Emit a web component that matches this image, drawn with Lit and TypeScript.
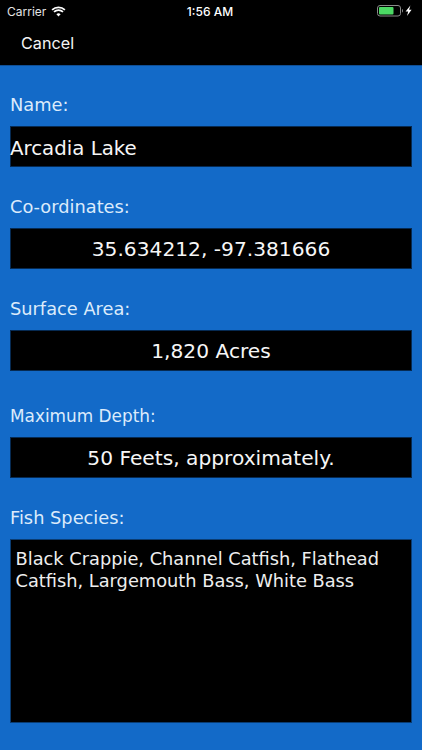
import { LitElement, html, css, svg } from "lit";
import { customElement } from "lit/decorators.js";

@customElement("app-root")
export class AppRoot extends LitElement {
  static styles = css`
    :host { display: flex; flex-direction: column; width: 422px; height: 750px; overflow: hidden; background: #136ac8; color: #fff; font-family: "DejaVu Sans", Verdana, sans-serif; }
    .top { height: 65px; flex: none; background: #000; display: flex; flex-direction: column; border-bottom: 1px solid #0f4f96; box-sizing: content-box; }
    .status { height: 22px; padding: 0 9px 0 7px; display: grid; grid-template-columns: 1fr auto 1fr; align-items: center; font-family: Inter, "Liberation Sans", sans-serif; font-size: 12px; color: #fff; }
    .left { display: flex; align-items: center; gap: 5px; color: #e4e4e4; }
    .time { font-weight: 500; font-size: 12px; }
    .right { display: flex; justify-content: flex-end; align-items: center; gap: 1px; }
    .nav { height: 43px; display: flex; align-items: center; padding: 0 0 2px 21px; font-family: Inter, "Liberation Sans", sans-serif; font-size: 16.2px; box-sizing: border-box; color: #f4f4f4; }
    .form { flex: 1; display: flex; flex-direction: column; padding: 0 10px; }
    .label { font-size: 17.8px; line-height: 20px; color: #dcebfb; margin-top: 30px; }
    .label.first { margin-top: 29px; }
    .label.depth { margin-top: 35px; font-size: 16.9px; }
    .box { background: #000; height: 41px; margin-top: 11px; display: flex; align-items: center; justify-content: center; font-size: 20.2px; box-shadow: inset 0 0 0 1px #062a52; color: #f6f6f6; }
    .box.start { justify-content: flex-start; padding-top: 3px; box-sizing: border-box; font-size: 19.8px; }
    .area { background: #000; height: 184px; margin-top: 11px; box-sizing: border-box; padding: 9px 6px 9px 5.5px; font-size: 17.8px; line-height: 22px; box-shadow: inset 0 0 0 1px #0a3c72; color: #eee; }
  `;

  wifi() {
    return html`<svg width="15" height="11" viewBox="0 0 15 11" aria-hidden="true">
      ${svg`<path d="M7.5 10.6 9.6 8.3a3 3 0 0 0-4.2 0Z" fill="#fff"/>
      <path d="M1.1 3.9a9.2 9.2 0 0 1 12.8 0M3 5.9a6.5 6.5 0 0 1 9 0" fill="none" stroke="#fff" stroke-width="1.7"/>`}
    </svg>`;
  }

  battery() {
    return html`<svg width="36" height="12" viewBox="0 0 36 12" aria-hidden="true">
      ${svg`<rect x="0.5" y="0.5" width="23" height="10.5" rx="2.5" fill="none" stroke="#8a8a8a"/>
      <rect x="2" y="2" width="14.5" height="7.5" rx="1" fill="#4cd964"/>
      <path d="M25 4v3.5c.8-.2 1-.9 1-1.7s-.2-1.5-1-1.8Z" fill="#8a8a8a"/>
      <path d="M33.4 .6 28.6 6.6h2.6L30 11l4.6-6.2h-2.5Z" fill="#fff"/>`}
    </svg>`;
  }

  render() {
    return html`
      <div class="top">
        <div class="status">
          <div class="left"><span>Carrier</span>${this.wifi()}</div>
          <div class="time">1:56 AM</div>
          <div class="right">${this.battery()}</div>
        </div>
        <div class="nav">Cancel</div>
      </div>
      <div class="form">
        <div class="label first">Name:</div>
        <div class="box start">Arcadia Lake</div>
        <div class="label">Co-ordinates:</div>
        <div class="box">35.634212, -97.381666</div>
        <div class="label">Surface Area:</div>
        <div class="box">1,820 Acres</div>
        <div class="label depth">Maximum Depth:</div>
        <div class="box">50 Feets, approximately.</div>
        <div class="label">Fish Species:</div>
        <div class="area">Black Crappie, Channel Catfish, Flathead Catfish, Largemouth Bass, White Bass</div>
      </div>
    `;
  }
}
